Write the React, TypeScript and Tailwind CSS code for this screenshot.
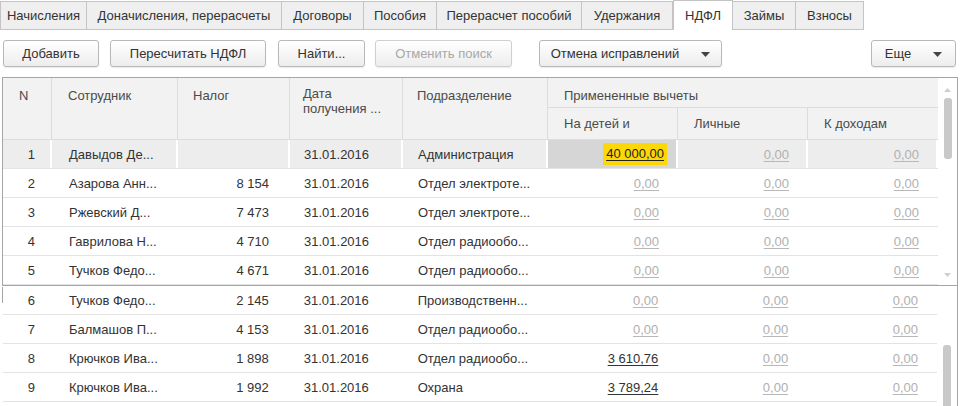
const tabs = [
  { label: "Начисления", w: 87 },
  { label: "Доначисления, перерасчеты", w: 195 },
  { label: "Договоры", w: 82 },
  { label: "Пособия", w: 73 },
  { label: "Перерасчет пособий", w: 145 },
  { label: "Удержания", w: 91 },
  { label: "НДФЛ", w: 60, active: true },
  { label: "Займы", w: 63 },
  { label: "Взносы", w: 68 },
];

type Row = { n: number; name: string; tax: string; dept: string; kids: string };

const topRows: Row[] = [
  { n: 1, name: "Давыдов Де...", tax: "", dept: "Администрация", kids: "40 000,00" },
  { n: 2, name: "Азарова Анн...", tax: "8 154", dept: "Отдел электроте...", kids: "0,00" },
  { n: 3, name: "Ржевский Д...", tax: "7 473", dept: "Отдел электроте...", kids: "0,00" },
  { n: 4, name: "Гаврилова Н...", tax: "4 710", dept: "Отдел радиообо...", kids: "0,00" },
  { n: 5, name: "Тучков Федо...", tax: "4 671", dept: "Отдел радиообо...", kids: "0,00" },
];

const bottomRows: Row[] = [
  { n: 6, name: "Тучков Федо...", tax: "2 145", dept: "Производственн...", kids: "0,00" },
  { n: 7, name: "Балмашов П...", tax: "4 153", dept: "Отдел радиообо...", kids: "0,00" },
  { n: 8, name: "Крючков Ива...", tax: "1 898", dept: "Отдел радиообо...", kids: "3 610,76" },
  { n: 9, name: "Крючков Ива...", tax: "1 992", dept: "Охрана", kids: "3 789,24" },
];

function Caret() {
  return (
    <svg width="9" height="5" viewBox="0 0 9 5" className="ml-[22px]">
      <path d="M0 0h9L4.5 5z" fill="#444" />
    </svg>
  );
}

function Btn({ children, w, disabled, caret }: { children: string; w: number; disabled?: boolean; caret?: boolean }) {
  return (
    <div
      style={{ width: w }}
      className={`h-[27px] flex items-center justify-center pt-px rounded-[3px] border bg-gradient-to-b from-[#ffffff] to-[#ededed] shadow-[0_1px_1px_rgba(0,0,0,0.08)] ${disabled ? "text-[#a8a8a8] border-[#d0d0d0]" : "text-[#333] border-[#b8b8b8]"}`}
    >
      <span>{children}</span>
      {caret && <Caret />}
    </div>
  );
}

function Amount({ v, first, selected }: { v: string; first?: boolean; selected?: boolean }) {
  const zero = v === "0,00";
  return (
    <div className={`h-full flex items-center justify-end border-r-2 border-white ${selected && first ? "bg-[#d6d6d6] pr-[9px]" : "pr-[11px]"}`}>
      {selected && first ? (
        <span className="bg-[#fcd806] px-[3px] h-[22px] flex items-center text-[#222] underline underline-offset-2">{v}</span>
      ) : (
        <span className={`pr-[6px] pt-px underline underline-offset-2 ${zero ? "text-[#b0b0b0] decoration-[#b8b8b8]" : "text-[#333]"}`}>{v}</span>
      )}
    </div>
  );
}

function DataRow({ r, selected }: { r: Row; selected?: boolean }) {
  return (
    <div className={`flex h-[29px] border-b border-[#e3e3e3] ${selected ? "bg-[#ededed]" : ""}`}>
      <div className="w-[49px] flex items-center justify-end pt-px pr-[15px] border-r-2 border-white">{r.n}</div>
      <div className="w-[126px] flex items-center pt-px pl-[17px] border-r-2 border-white">{r.name}</div>
      <div className="w-[112px] flex items-center justify-end pt-px pr-[19px] border-r-2 border-white">{r.tax}</div>
      <div className="w-[113px] flex items-center pt-px pl-[14px] border-r-2 border-white">31.01.2016</div>
      <div className="w-[145px] flex items-center pt-px pl-[15px] border-r-2 border-white">{r.dept}</div>
      <div className="w-[130px] h-full">
        <Amount v={r.kids} first selected={selected} />
      </div>
      <div className="w-[130px] h-full">
        <Amount v="0,00" selected={selected} />
      </div>
      <div className="w-[130px] h-full">
        <Amount v="0,00" selected={selected} />
      </div>
    </div>
  );
}

export default function App() {
  return (
    <div className="w-[963px] h-[406px] overflow-hidden bg-white text-[13px] text-[#333] font-['Liberation_Sans',Arial,sans-serif]">
      {/* tabs */}
      <div className="flex h-[30px] items-end">
        {tabs.map((t) =>
          t.active ? (
            <div
              key={t.label}
              style={{ width: t.w }}
              className="h-[30px] flex items-center justify-center bg-white border-t border-x border-[#c4c4c4] text-[#333]"
            >
              {t.label}
            </div>
          ) : (
            <div
              key={t.label}
              style={{ width: t.w }}
              className="h-[29px] flex items-center justify-center bg-[#efefef] border border-[#c4c4c4] border-l-0 first:border-l text-[#333]"
            >
              {t.label}
            </div>
          )
        )}
        <div className="flex-1" />
      </div>

      {/* toolbar */}
      <div className="flex items-center h-[27px] mt-[10px] pl-[3px]">
        <Btn w={96}>Добавить</Btn>
        <div className="w-[11px]" />
        <Btn w={156}>Пересчитать НДФЛ</Btn>
        <div className="w-[12px]" />
        <Btn w={87}>Найти...</Btn>
        <div className="w-[10px]" />
        <Btn w={137} disabled>Отменить поиск</Btn>
        <div className="w-[27px]" />
        <Btn w={183} caret>Отмена исправлений</Btn>
        <div className="flex-1" />
        <Btn w={85} caret>Еще</Btn>
        <div className="w-[7px]" />
      </div>

      {/* upper table */}
      <div className="relative mt-[10px] ml-[2px] w-[956px] h-[209px] border border-[#a6a6a6] flex">
        <div className="w-[935px]">
          <div className="flex h-[62px] bg-[#f2f2f2] border-b border-[#dcdcdc] text-[#4a4a4a]">
            <div className="w-[49px] pt-[8px] pl-[16px] border-r border-[#dcdcdc]">N</div>
            <div className="w-[126px] pt-[8px] pl-[16px] border-r border-[#dcdcdc]">Сотрудник</div>
            <div className="w-[112px] pt-[8px] pl-[15px] border-r border-[#dcdcdc]">Налог</div>
            <div className="w-[113px] pt-[8px] pl-[13px] border-r border-[#dcdcdc] leading-[15px]">
              Дата
              <br />
              получения ...
            </div>
            <div className="w-[145px] pt-[8px] pl-[14px] border-r border-[#dcdcdc]">Подразделение</div>
            <div className="w-[390px] flex flex-col">
              <div className="h-[30px] pt-[8px] pl-[16px] border-b border-[#dcdcdc]">Примененные вычеты</div>
              <div className="flex flex-1">
                <div className="w-[130px] flex items-center pl-[16px] border-r border-[#dcdcdc]">На детей и</div>
                <div className="w-[130px] flex items-center pl-[16px] border-r border-[#dcdcdc]">Личные</div>
                <div className="w-[130px] flex items-center pl-[16px]">К доходам</div>
              </div>
            </div>
          </div>
          {topRows.map((r, i) => (
            <DataRow key={r.n} r={r} selected={i === 0} />
          ))}
        </div>
        {/* scrollbar */}
        <div className="flex-1 flex flex-col items-center pt-[10px] pb-[8px]">
          <svg width="7" height="4" viewBox="0 0 7 4">
            <path d="M0 4h7L3.5 0z" fill="#cfcfcf" />
          </svg>
          <div className="w-[8px] h-[61px] mt-[6px] rounded-[3px] bg-[#c9c9c9]" />
          <div className="flex-1" />
          <svg width="7" height="4" viewBox="0 0 7 4">
            <path d="M0 0h7L3.5 4z" fill="#cfcfcf" />
          </svg>
        </div>
      </div>

      {/* lower table */}
      <div className="relative ml-[2px] w-[956px] h-[130px] border-r border-[#a6a6a6] flex">
        <div className="absolute left-0 top-[1px] h-[16px] w-px bg-[#a6a6a6]" />
        <div className="w-[935px] pl-px">
          {bottomRows.map((r) => (
            <DataRow key={r.n} r={r} />
          ))}
        </div>
        <div className="flex-1 flex flex-col items-center pt-[59px]">
          <div className="w-[8px] flex-1 rounded-t-[3px] bg-[#c9c9c9]" />
        </div>
      </div>
    </div>
  );
}
